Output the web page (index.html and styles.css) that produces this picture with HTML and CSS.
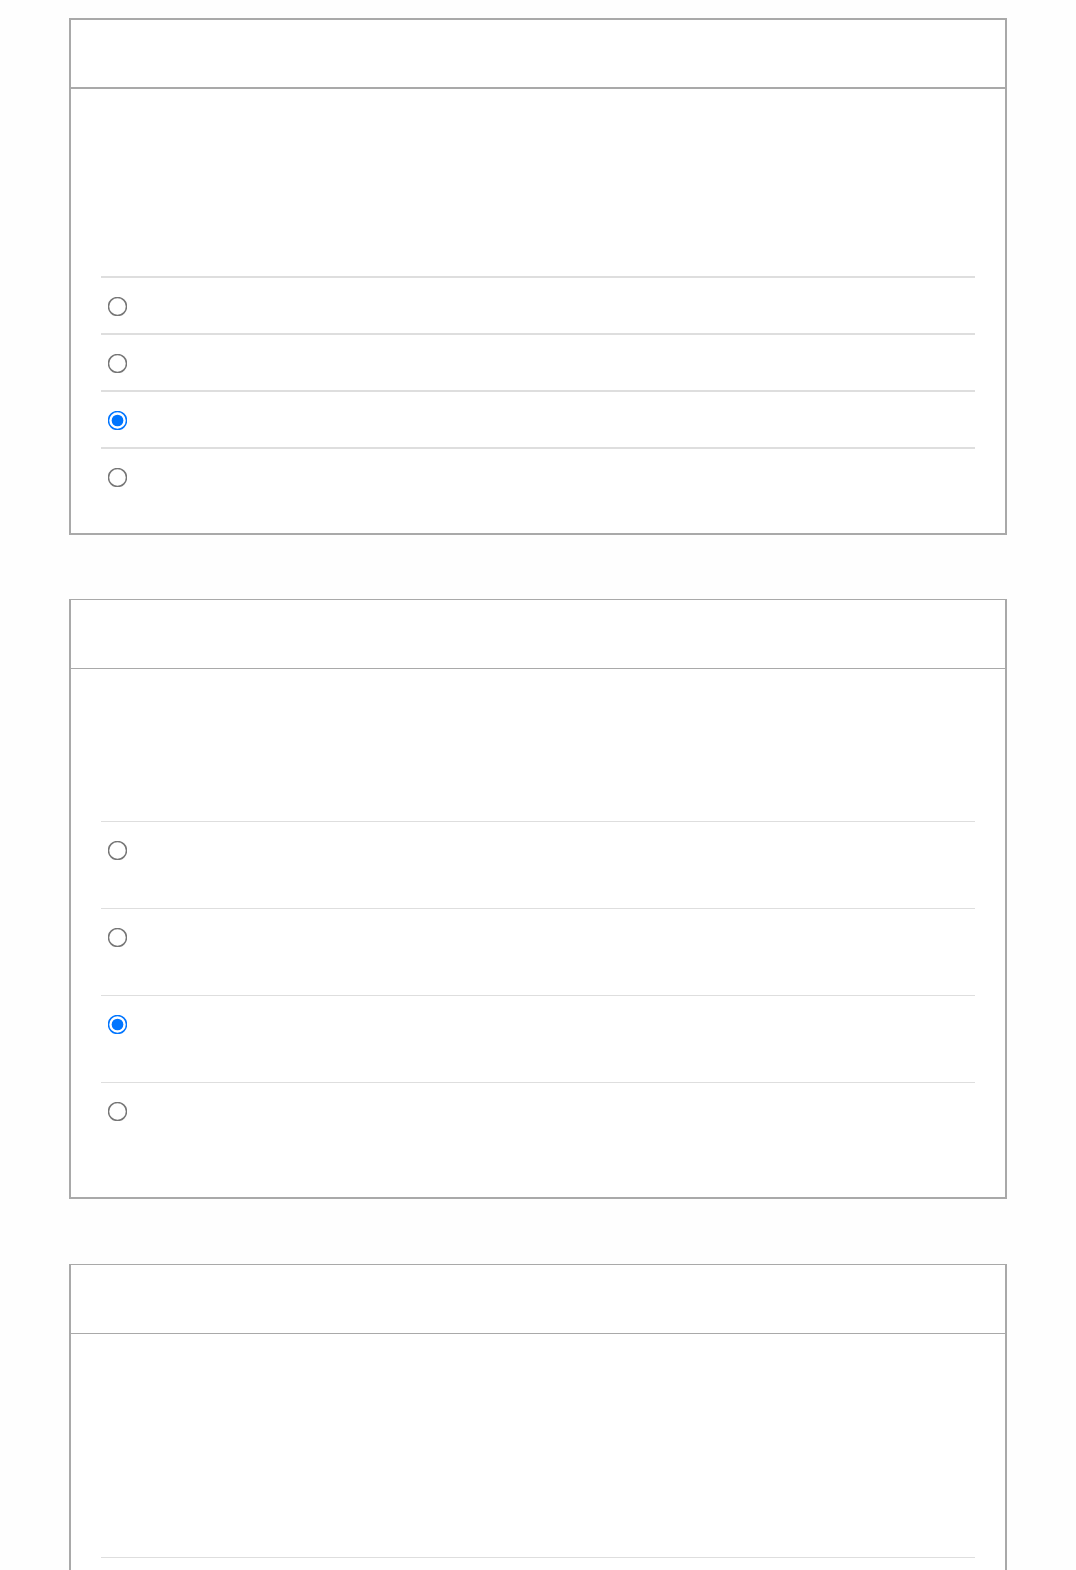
FILE: index.html
```html
<!DOCTYPE html>
<html lang="en">
<head>
  <meta charset="UTF-8">
  <meta name="viewport" content="width=device-width, initial-scale=1.0">
  <title>Quiz</title>
  <link rel="stylesheet" href="styles.css">
</head>
<body>
  <main class="quiz">
    <section class="card card-first">
      <header class="card-header"></header>
      <div class="card-body">
        <div class="question q-short"></div>
        <ul class="options">
          <li class="option"><input type="radio" name="q1"></li>
          <li class="option"><input type="radio" name="q1"></li>
          <li class="option"><input type="radio" name="q1" checked></li>
          <li class="option"><input type="radio" name="q1"></li>
        </ul>
      </div>
    </section>

    <section class="card">
      <header class="card-header"></header>
      <div class="card-body">
        <div class="question q-mid"></div>
        <ul class="options options-tall">
          <li class="option"><input type="radio" name="q2"></li>
          <li class="option"><input type="radio" name="q2"></li>
          <li class="option"><input type="radio" name="q2" checked></li>
          <li class="option"><input type="radio" name="q2"></li>
        </ul>
      </div>
    </section>

    <section class="card">
      <header class="card-header"></header>
      <div class="card-body">
        <div class="question q-long"></div>
        <ul class="options options-tall">
          <li class="option"><input type="radio" name="q3"></li>
          <li class="option"><input type="radio" name="q3"></li>
          <li class="option"><input type="radio" name="q3"></li>
          <li class="option"><input type="radio" name="q3"></li>
        </ul>
      </div>
    </section>
  </main>
</body>
</html>
```

FILE: styles.css
```css
body {
  font-family: "Liberation Sans", Arial, sans-serif;
  margin: 0;
  padding: 0;
  background-color: #fefefe;
}

.quiz {
  padding-top: 18px;
  padding-left: 69px;
}

.card {
  width: 934px;
  background-color: #fff;
  border: 2px solid #a9a9a9;
  border-top-width: 1px;
  margin-bottom: 65px;
}

.card-header {
  height: 68px;
  border-bottom: 1px solid #a9a9a9;
}

.card-first {
  border-top-width: 2px;
  margin-bottom: 64px;
}

.card-first .card-header {
  height: 67px;
  border-bottom-width: 2px;
}

.card-body {
  padding: 0 30px 29px;
}

.question.q-short {
  height: 187px;
}

.question.q-mid {
  height: 152px;
}

.question.q-long {
  height: 223px;
}

.options {
  list-style: none;
  margin: 0;
  padding: 0;
}

.option {
  display: flex;
  align-items: flex-start;
  border-top: 2px solid #dedede;
  padding: 18px 7px 17px;
}

.options-tall .option {
  border-top-width: 1px;
  padding-bottom: 48px;
}

.options-tall .option:last-child {
  padding-bottom: 47px;
}

.option input[type="radio"] {
  width: 13px;
  height: 13px;
  margin: 3.5px 4px 3.5px 3px;
  transform: scale(1.5);
  cursor: pointer;
}
```
